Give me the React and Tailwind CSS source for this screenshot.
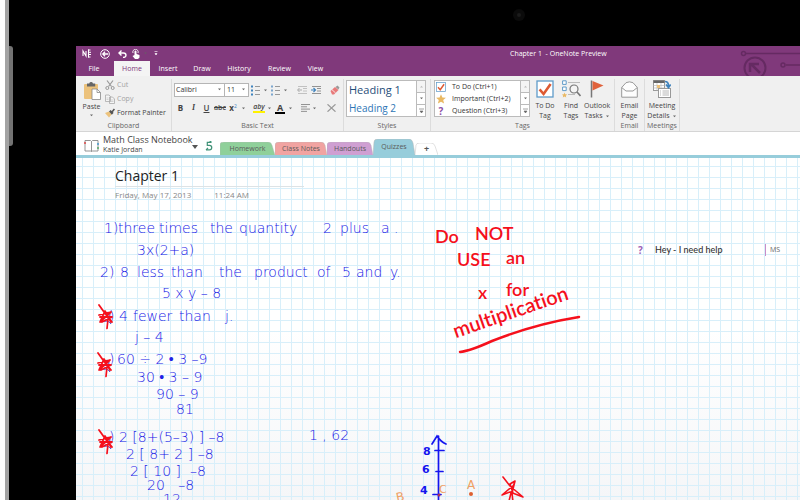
import React from "react";

const GROUP_LABEL = "flex h-[11px] items-center justify-center text-[7px] leading-[8px] text-[#666]";

function Caret({ className = "" }) {
  return (
    <svg viewBox="0 0 5 3" className={"h-[3px] w-[5px] shrink-0 " + className} aria-hidden="true">
      <path d="M1 0.5h3L2.5 2.3z" fill="#666" />
    </svg>
  );
}

function CaretButton({ label, className = "w-2" }) {
  return (
    <button aria-label={label} className={"flex h-4 shrink-0 items-center justify-center " + className}>
      <Caret />
    </button>
  );
}

function Tool({ label, className = "w-[10px]", children }) {
  return (
    <button aria-label={label} className={"flex h-4 shrink-0 items-center justify-center text-[8px] leading-[10px] text-[#444] " + className}>
      {children}
    </button>
  );
}

function Group({ label, className, children }) {
  return (
    <section aria-label={label} className={"flex shrink-0 flex-col border-r border-[#dcdcdc] " + className}>
      <div className="h-[43px]">{children}</div>
      <div className={GROUP_LABEL}>{label}</div>
    </section>
  );
}

function Scroller() {
  return (
    <div className="flex w-[9px] shrink-0 flex-col border-l border-[#bbb]">
      <button aria-label="Scroll up" className="flex flex-1 items-center justify-center bg-[#f4f4f4]">
        <svg viewBox="0 0 5 3" className="h-[3px] w-[5px]"><path d="M1 2.5h3L2.500 0.700z" fill="#bbb" /></svg>
      </button>
      <button aria-label="Scroll down" className="flex flex-1 items-center justify-center border-y border-[#bbb]">
        <Caret />
      </button>
      <button aria-label="More" className="flex flex-1 items-center justify-center">
        <svg viewBox="0 0 5 6" className="h-[6px] w-[5px]"><path d="M0 1h5M1 3h3L2.500 5z" fill="#666" stroke="#666" strokeWidth="0.6" /></svg>
      </button>
    </div>
  );
}

function BigButton({ lines, caret, className, children }) {
  return (
    <button className={"flex shrink-0 flex-col items-center text-[7px] leading-[10px] text-[#444] " + className}>
      <span className="mt-px mb-[3px] flex h-[18px] items-center">{children}</span>
      <span className="whitespace-nowrap">{lines[0]}</span>
      <span className="flex h-[10px] items-center gap-[2px] whitespace-nowrap">
        {lines[1]}
        {caret && <Caret />}
      </span>
    </button>
  );
}

function ListIcon({ dot }) {
  return (
    <svg viewBox="0 0 10 11" className="h-[11px] w-[10px]">
      <g fill={dot}><rect y="0.5" width="2" height="2" /><rect y="4.5" width="2" height="2" /><rect y="8.5" width="2" height="2" /></g>
      <path d="M4 1.5h5M4 5.5h5M4 9.5h5" stroke="#999" />
    </svg>
  );
}

function CheckBoxIcon({ className }) {
  return (
    <svg viewBox="0 0 18 18" className={className}>
      <rect x="1" y="1" width="16" height="16" fill="#fff" stroke="#5f9bc9" strokeWidth="1.3" />
      <path d="M3.6 9.4l4 4.6 7-10" fill="none" stroke="#dd5a33" strokeWidth="2.6" />
    </svg>
  );
}

function SectionTab({ label, color, path, width, className, active, textClass = "text-[#5a5a5a]" }) {
  return (
    <button aria-pressed={!!active} className={"relative shrink-0 text-[7px] leading-[8px] " + className}>
      <svg viewBox={"0 0 " + width + " 16"} preserveAspectRatio="none" className="absolute inset-0 h-full w-full" aria-hidden="true">
        <path d={path} fill={color} stroke="#b9b9b9" strokeWidth="0.5" />
      </svg>
      <span className={"relative whitespace-nowrap " + textClass}>{label}</span>
    </button>
  );
}

function RibbonGroups() {
  return (
    <div className="flex h-[56px] shrink-0 overflow-hidden border-b border-[#d5d5d5] bg-[#f0f0f0] pt-[3px]">
      <Group label="Clipboard" className="w-[96px]">
        <div className="flex gap-[3px] pt-[2px] pl-[5px]">
          <button className="flex w-[21px] flex-col items-center text-[7px] leading-[10px] text-[#444]">
            <svg viewBox="0 0 18 19" className="mb-[2px] h-[19px] w-[18px]">
              <rect x="1" y="3" width="14" height="15" rx="1" fill="#ecc27c" />
              <path d="M4 2.5h2.2a2 2 0 0 1 3.8 0h2.2v3H4z" fill="#666" />
              <path d="M9 8h5l3.5 3.5V18.500H9z" fill="#fff" stroke="#888" strokeWidth="0.8" />
              <path d="M14 8v3.500h3.500" fill="none" stroke="#888" strokeWidth="0.8" />
            </svg>
            Paste
            <Caret className="mt-[2px]" />
          </button>
          <div className="flex flex-col text-[7px] leading-[14px] text-[#a3a3a3]">
            <button className="-mt-[3px] flex h-[14px] items-center gap-[2px]">
              <svg viewBox="0 0 10 10" className="h-[10px] w-[10px]"><path d="M2 0.500l4.500 6M8 0.500l-4.500 6" stroke="#999" strokeWidth="1.200" /><circle cx="2.300" cy="8" r="1.500" fill="none" stroke="#999" /><circle cx="7.700" cy="8" r="1.500" fill="none" stroke="#999" /></svg>
              Cut
            </button>
            <button className="flex h-[14px] items-center gap-[2px]">
              <svg viewBox="0 0 10 10" className="h-[10px] w-[10px]"><path d="M0.500 1h3.500l1.500 1.500v5h-5z M4.500 3h3l2 2v4.500h-5z" fill="#f5f5f5" stroke="#aaa" strokeWidth="0.800" /><path d="M1.500 4h2M1.500 5.500h2M5.500 6h3M5.500 7.500h3" stroke="#bbb" strokeWidth="0.600" /></svg>
              Copy
            </button>
            <button className="flex h-[14px] items-center gap-[2px] whitespace-nowrap text-[#444]">
              <svg viewBox="0 0 10 10" className="h-[10px] w-[10px]"><path d="M0 5l4-1.500 2.500 3L4 9.500z" fill="#ecc27c" /><path d="M4 3.500l1.500-1.500 1.300 1 2-2.500L10 1.500 8 4l0.500 1-1.700 1.800z" fill="#555" /></svg>
              Format Painter
            </button>
          </div>
        </div>
      </Group>

      <Group label="Basic Text" className="w-[172px]">
        <div className="flex items-center pt-[3px] pl-[2px]">
          <label className="relative flex">
            <select aria-label="Font" className="h-[14px] w-[51px] appearance-none border border-[#b5b5b5] bg-white pl-px text-[7px] leading-[8px] text-[#333]"><option>Calibri</option></select>
            <Caret className="pointer-events-none absolute top-[5px] right-[3px]" />
          </label>
          <label className="relative flex">
            <select aria-label="Font size" className="h-[14px] w-[24px] appearance-none border border-l-0 border-[#b5b5b5] bg-white pl-[2px] text-[7px] leading-[8px] text-[#333]"><option>11</option></select>
            <Caret className="pointer-events-none absolute top-[5px] right-[3px]" />
          </label>
          <Tool label="Bullets" className="ml-[2px] w-[10px]"><ListIcon dot="#3f83bd" /></Tool>
          <CaretButton label="Bullet styles" />
          <Tool label="Numbering" className="ml-[2px] w-[10px]"><ListIcon dot="#7ca6cd" /></Tool>
          <CaretButton label="Number styles" />
          <Tool label="Decrease indent" className="ml-2 w-[10px]">
            <svg viewBox="0 0 10 8" className="h-2 w-[10px]"><path d="M1 0.500h9M6 2.500h4M6 5h4M1 7.500h9" stroke="#bbb" strokeWidth="0.900" /><path d="M5 4H1M2.500 2L0.500 4l2 2" fill="none" stroke="#aaa" /></svg>
          </Tool>
          <Tool label="Increase indent" className="ml-1 w-[10px]">
            <svg viewBox="0 0 10 8" className="h-2 w-[10px]"><path d="M1 0.500h9M6 2.500h4M6 5h4M1 7.500h9" stroke="#888" strokeWidth="0.900" /><path d="M0 4h4M2.500 2l2 2-2 2" fill="none" stroke="#3f83bd" strokeWidth="1.200" /></svg>
          </Tool>
          <Tool label="Clear formatting" className="ml-[9px] w-[10px]">
            <svg viewBox="0 0 10 10" className="h-[10px] w-[10px]"><path d="M0.500 6L5 2l3.500 3L4 9.500H2z" fill="#e77a7a" /><path d="M5.500 2L7.500 0.500 9.500 2.500 8.300 4.500z" fill="#999" /><path d="M2 4.700l3.500 3.200" stroke="#fff" strokeWidth="0.800" /></svg>
          </Tool>
        </div>
        <div className="flex items-center pt-[2px] pl-[2px]">
          <Tool label="Bold" className="w-[13px]"><b>B</b></Tool>
          <Tool label="Italic" className="w-[13px]"><i className="font-['Liberation_Serif',serif] font-bold">I</i></Tool>
          <Tool label="Underline" className="w-[13px]"><u className="font-semibold">U</u></Tool>
          <Tool label="Strikethrough" className="w-[14px]"><s className="text-[7px] font-semibold">abc</s></Tool>
          <Tool label="Superscript" className="w-[12px]"><b>x</b><sup className="text-[5px] leading-[6px] text-[#3f83bd]">2</sup></Tool>
          <CaretButton label="Script options" />
          <Tool label="Highlight" className="ml-[6px] w-[12px]">
            <span className="border-b-2 border-[#fff200] text-[7px] leading-[8px] font-semibold italic">aby</span>
          </Tool>
          <CaretButton label="Highlight colors" />
          <Tool label="Font color" className="ml-px w-[12px]">
            <span className="w-[10px] border-b-2 border-black text-[9px] leading-[9px] font-bold">A</span>
          </Tool>
          <CaretButton label="Font colors" />
          <Tool label="Align" className="ml-[6px] w-[11px]">
            <svg viewBox="0 0 10 8" className="h-2 w-[10px]"><path d="M0 0.500h9M0 2.800h6M0 5.100h9M0 7.400h6" stroke="#888" strokeWidth="0.900" /></svg>
          </Tool>
          <CaretButton label="Alignments" className="w-[7px]" />
          <Tool label="Delete" className="ml-2 w-[10px]">
            <svg viewBox="0 0 9 8" className="h-2 w-[9px]"><path d="M0.500 0.300l8 7.400M8.500 0.300l-8 7.400" stroke="#999" strokeWidth="1.200" /></svg>
          </Tool>
        </div>
      </Group>

      <Group label="Styles" className="w-[87px]">
        <div className="ml-[2px] mt-px flex h-[37px] w-[80px] border border-[#bbb] bg-white">
          <div className="flex flex-1 flex-col items-start pl-[2px] text-[11px] leading-[18px] whitespace-nowrap">
            <button className="h-[18px] text-[#1f4e79]">Heading 1</button>
            <button className="h-[18px] text-[10px] text-[#2e75b5]">Heading 2</button>
          </div>
          <Scroller />
        </div>
      </Group>

      <Group label="Tags" className="w-[184px]">
        <div className="flex">
          <div className="mt-px ml-[3px] flex h-[37px] w-[96px] border border-[#bbb] bg-white">
            <div className="flex flex-1 flex-col text-[7px] leading-[12px] whitespace-nowrap text-[#333]">
              <button className="flex h-[12px] items-center gap-[6px] pl-px"><CheckBoxIcon className="h-[10px] w-[10px]" />To Do (Ctrl+1)</button>
              <button className="flex h-[12px] items-center gap-[6px] pl-px">
                <svg viewBox="0 0 10 10" className="h-[10px] w-[10px]"><path d="M5 0.300l1.400 3.200 3.500 0.300-2.700 2.300 0.900 3.500L5 7.700 1.900 9.600l0.900-3.500L0.100 3.800l3.500-0.300z" fill="#e9b862" /></svg>
                Important (Ctrl+2)
              </button>
              <button className="flex h-[12px] items-center gap-[6px] pl-px"><span className="w-[10px] text-center text-[10px] font-bold text-[#8d4fa6]">?</span>Question (Ctrl+3)</button>
            </div>
            <Scroller />
          </div>
          <BigButton lines={["To Do", "Tag"]} className="ml-[3px] w-[24px]"><CheckBoxIcon className="h-[18px] w-[18px]" /></BigButton>
          <BigButton lines={["Find", "Tags"]} className="ml-px w-[26px]">
            <svg viewBox="0 0 19 18" className="h-[18px] w-[19px]">
              <path d="M0.600 0.800h3.600v3.600H0.600zM0.600 7h3.600v3.600H0.600z" fill="#fff" stroke="#5f9bc9" />
              <path d="M2.500 12.500l0.800 1.700 1.900 0.200-1.400 1.300 0.400 1.900-1.700-1-1.700 1 0.400-1.900L0 14.400l1.900-0.200z" fill="#e9b862" />
              <path d="M6 2.500h12M6 14.500h7" stroke="#bbb" />
              <circle cx="12" cy="9" r="4" fill="#f4f4f4" stroke="#777" strokeWidth="1.200" /><path d="M15 12l3.500 4" stroke="#777" strokeWidth="1.600" />
            </svg>
          </BigButton>
          <BigButton lines={["Outlook", "Tasks"]} caret className="w-[26px]">
            <svg viewBox="0 0 14 18" className="h-[18px] w-[14px]"><path d="M1.500 0.500v17" stroke="#777" strokeWidth="1.500" /><path d="M2.500 1l11 4.500-11 5z" fill="#e0623c" /></svg>
          </BigButton>
        </div>
      </Group>

      <Group label="Email" className="w-[30px]">
        <BigButton lines={["Email", "Page"]} className="w-full">
          <svg viewBox="0 0 17 17" className="h-[17px] w-[17px]"><path d="M0.700 6.500L5 1.700Q8.500 0 12 1.700l4.300 4.800v9.700H0.700z" fill="#fdfdfd" stroke="#999" /><path d="M0.700 6.500L5 10h7l4.300-3.500" fill="none" stroke="#999" /></svg>
        </BigButton>
      </Group>

      <Group label="Meetings" className="w-[35px]">
        <BigButton lines={["Meeting", "Details"]} caret className="w-full">
          <svg viewBox="0 0 18 18" className="h-[18px] w-[18px]">
            <rect x="0.500" y="0.500" width="11" height="10" fill="#fff" stroke="#999" /><path d="M0.500 0.500h11v2.500H0.500z" fill="#666" />
            <path d="M0.500 5.500h11M0.500 8h11M4 3v7.500M8 3v7.500" stroke="#bbb" strokeWidth="0.700" /><rect x="4" y="5" width="3" height="3" fill="#ecc27c" />
            <rect x="5.500" y="8.500" width="12" height="9" fill="#fff" stroke="#999" /><path d="M7 11h1M7 13h1M7 15h1M9.500 11h6.500M9.500 13h6.500M9.500 15h6.500" stroke="#999" strokeWidth="0.700" />
            <path d="M12 1.500q3.500 0 3.500 4.500M13 4.500l2.500 3 2.200-3" fill="none" stroke="#3f83bd" strokeWidth="1.700" />
          </svg>
        </BigButton>
      </Group>
    </div>
  );
}

/* Handwritten words: [text, left, baseline] in canvas coordinates */
const BLUE_INK = [
  ["1)", 28, 76], ["three", 42, 76], ["times", 83, 76], ["the", 134, 76], ["quantity", 163, 76], ["2", 247, 76], ["plus", 264, 76], ["a .", 305, 76],
  ["3x(2+a)", 61, 98],
  ["2)", 24, 120], ["8", 44, 120], ["less", 61, 120], ["than", 95, 120], ["the", 143, 120], ["product", 178, 120], ["of", 241, 120], ["5", 266, 120], ["and", 280, 120], ["y.", 314, 120],
  ["5 x y – 8", 86, 141],
  [")", 33, 164], ["4", 43, 164], ["fewer", 57, 164], ["than", 103, 164], ["j.", 149, 164],
  ["j – 4", 59, 185],
  [")", 33, 207], ["60 ÷ 2 • 3 –9", 41, 207],
  ["30 • 3 – 9", 61, 225],
  ["90 – 9", 80, 242],
  ["81", 100, 257],
  [")", 33, 285], ["2 [8+(5–3) ] –8", 43, 285],
  ["2 [ 8+ 2 ] –8", 50, 302],
  ["2 [ 10 ]  –8", 54, 319],
  ["20   –8", 71, 333],
  ["12", 87, 347],
  ["1 , 62", 233, 283],
];

const RED_INK = [
  ["Do", 359, 85], ["NOT", 399, 82], ["USE", 381, 108], ["an", 430, 106], ["x", 402, 141], ["for", 430, 138],
];

function InkStar({ className }) {
  return (
    <svg viewBox="0 0 17 26" className={"absolute h-[26px] w-[17px] " + className} aria-hidden="true">
      <path d="M7 9q5-2 5 2t-6 6q6 0 7 3" fill="none" stroke="#3838d0" />
      <path d="M1 1l5 7 8 10M1 11l12-3-11 10 5-11 6 11M2 13h12L4 18" fill="none" stroke="#f5101c" strokeWidth="1.800" strokeLinejoin="round" strokeLinecap="round" />
      <path d="M10 15L9 24.500" stroke="#f5101c" strokeWidth="1.700" strokeLinecap="round" />
    </svg>
  );
}

function Canvas() {
  return (
    <main className="relative flex-1 overflow-hidden bg-[linear-gradient(to_right,#d8effa_1px,transparent_1px),linear-gradient(to_bottom,#d8effa_1px,transparent_1px),linear-gradient(to_bottom,#ffffff_50%,#f5f6f8)] bg-size-[11px_11px,11px_11px,100%_100%] bg-position-[6px_0px,0px_8px,0px_0px]">
      <header className="ml-[30px] w-[198px] pl-[9px]">
        <h1 className="h-[29px] border-b border-[#dde3e6] pt-[8px] text-[14px] leading-[20px] text-[#222]">Chapter 1</h1>
        <p className="flex gap-[23px] pt-[3px] text-[8px] leading-[10px] whitespace-nowrap text-[#888]"><span>Friday, May 17, 2013</span><span>11:24 AM</span></p>
      </header>

      {BLUE_INK.map(([text, x, y]) => (
        <span key={text + x + y} className="absolute -mt-[15px] font-['DejaVu_Sans',sans-serif] text-[14px] leading-[18px] font-extralight whitespace-pre text-[#2020e6]" style={{ left: x, top: y }}>{text}</span>
      ))}
      {RED_INK.map(([text, x, y]) => (
        <span key={text} className="absolute -mt-[19px] font-['Lato',sans-serif] text-[18px] leading-[24px] font-semibold whitespace-pre text-[#f5101c]" style={{ left: x, top: y }}>{text}</span>
      ))}
      <span className="absolute top-[160px] left-[381px] origin-bottom-left -rotate-[19deg] font-['Lato',sans-serif] text-[20px] leading-[24px] font-semibold text-[#f5101c] [font-variant-ligatures:none]">multiplication</span>
      <svg viewBox="0 0 124 42" className="absolute top-[155px] left-[382px] h-[42px] w-[124px]" aria-hidden="true">
        <path d="M2 39q10-1 32-11Q77 11 121 4" fill="none" stroke="#f5101c" strokeWidth="2.500" strokeLinecap="round" />
      </svg>

      <InkStar className="top-[146px] left-[22px]" />
      <InkStar className="top-[194px] left-[21px]" />
      <InkStar className="top-[271px] left-[22px]" />

      <svg viewBox="0 0 30 70" className="absolute top-[276px] left-[350px] h-[70px] w-[30px]" aria-hidden="true">
        <path d="M12.500 70V2M6 10l5-8q4 6 9 8M9 16.500h9M10 37.500h7M7 60.500h8" fill="none" stroke="#1414ef" strokeWidth="1.700" strokeLinecap="round" />
        <circle cx="13" cy="61" r="1.500" fill="#b03050" />
      </svg>
      <span className="absolute top-[287px] left-[347px] font-['DejaVu_Sans',sans-serif] text-[11px] leading-[14px] font-bold text-[#1414ef]">8</span>
      <span className="absolute top-[305px] left-[346px] font-['DejaVu_Sans',sans-serif] text-[11px] leading-[14px] font-bold text-[#1414ef]">6</span>
      <span className="absolute top-[326px] left-[344px] font-['DejaVu_Sans',sans-serif] text-[11px] leading-[14px] font-bold text-[#1414ef]">4</span>
      <span className="absolute top-[325px] left-[363px] font-['DejaVu_Sans',sans-serif] text-[11px] leading-[14px] text-[#f0a064]">C</span>
      <span className="absolute top-[320px] left-[391px] font-['DejaVu_Sans',sans-serif] text-[12px] leading-[14px] text-[#f0a064]">A</span>
      <span className="absolute top-[332px] left-[320px] -rotate-12 font-['DejaVu_Sans',sans-serif] text-[12px] leading-[14px] text-[#f0a064]">B</span>
      <span className="absolute top-[334px] left-[393px] h-1 w-1 rounded-full bg-[#dd6030]" />
      <svg viewBox="0 0 25 28" className="absolute top-[317px] left-[424px] h-[28px] w-[25px]" aria-hidden="true">
        <path d="M3 2l7 9 13 11-13-5-8 3 12-10 1-4-4 12-2 8M10 9l5-3-3 12 1 9M10 9l3 9" fill="none" stroke="#f5101c" strokeWidth="1.600" strokeLinejoin="round" strokeLinecap="round" />
      </svg>

      <p className="absolute top-[86px] left-[562px] flex h-3 items-center whitespace-nowrap text-[8px] leading-[12px] font-medium text-[#333]">
        <span className="w-[17px] text-[10px] font-bold text-[#9c62b8]">?</span>
        <span className="w-[110px] font-['Lato',sans-serif] text-[9px]">Hey - I need help</span>
        <span className="border-l border-[#c98cc9] pl-1 text-[7px] text-[#666]">MS</span>
      </p>
    </main>
  );
}

export default function App() {
  return (
    <div className="relative flex h-screen overflow-hidden bg-black font-['Open_Sans','Noto_Sans',sans-serif]">
      <div className="w-[5px] shrink-0 bg-white" />
      <div className="w-1 shrink-0 bg-[#a3a3a3]" />
      <div className="w-[67px] shrink-0 pt-[46px]"><div className="h-[100px] w-1 rounded-r-[3px] bg-[#737373]" /></div>
      <div className="absolute top-[9px] left-[513px] flex h-3 w-3 items-center justify-center rounded-full bg-[#0b0b0b]"><span className="h-1 w-1 rounded-full bg-[#1c1c1c]" /></div>

      <div className="mt-[46px] flex min-w-0 flex-1 flex-col bg-white">
        <header className="relative flex h-[30px] shrink-0 flex-col overflow-hidden bg-[#80397b] text-white">
          <svg viewBox="0 0 60 30" className="absolute top-0 right-0 h-[30px] w-[60px]" fill="none" stroke="#652a62" strokeWidth="1.500" aria-hidden="true">
            <circle cx="3.500" cy="7.500" r="2" /><path d="M6 7.500h54M46 19h14" /><circle cx="43" cy="19" r="2" />
            <circle cx="15" cy="22" r="10.500" strokeWidth="2" /><path d="M20 27l-9-9M10 26v-8h9" strokeWidth="2.500" />
          </svg>
          <div className="flex h-[15px] items-center pl-[6px]">
            <svg viewBox="0 0 10 9" className="h-[9px] w-[10px]" fill="none" stroke="#fff" aria-hidden="true"><path d="M1 7v-5l3 5v-5" strokeWidth="1.100" /><path d="M6.500 0.500v8M6 1h2.500M7 3.300h2M7 5.500h2M6 8h2.500" strokeWidth="1" /></svg>
            <button aria-label="Back" className="ml-2"><svg viewBox="0 0 10 10" className="h-[10px] w-[10px]" fill="none" stroke="#fff"><circle cx="5" cy="5" r="4.300" /><path d="M8 5H3M5 2.800L2.800 5 5 7.200" strokeWidth="1.300" /></svg></button>
            <button aria-label="Undo" className="ml-2"><svg viewBox="0 0 9 8" className="h-2 w-[9px]" fill="none" stroke="#fff" strokeWidth="1.400"><path d="M3.500 0.500L1 3l2.500 2.500M1 3h4.500q2.500 0 2.500 2.200T5 7.500" /></svg></button>
            <button aria-label="Touch mode" className="ml-[5px]"><svg viewBox="0 0 8 10" className="h-[10px] w-2"><path d="M2.500 6V2.500a1 1 0 0 1 2 0V5l3 1v2.500L6 10H3L0.500 7z" fill="#fff" /><path d="M1 4a2.700 2.700 0 1 1 5 0" fill="none" stroke="#fff" strokeWidth="0.900" /></svg></button>
            <Caret className="ml-[3px] opacity-70" />
            <button aria-label="Customize toolbar" className="ml-[6px]"><svg viewBox="0 0 4 5" className="h-[5px] w-1"><path d="M0.500 0.500h3M1 2.500h2L2 4z" fill="#fff" stroke="#fff" strokeWidth="0.600" /></svg></button>
            <p className="ml-[352px] text-[7px] leading-[10px] whitespace-pre">Chapter 1  - OneNote Preview</p>
          </div>
          <nav className="flex h-[15px] text-[7px] leading-[15px]">
            <button className="w-[38px] pr-[2px]">File</button>
            <button className="w-[36px] bg-[#f4f4f4] text-[#80397b]">Home</button>
            <button className="w-[36px]">Insert</button>
            <button className="w-[32px]">Draw</button>
            <button className="w-[42px]">History</button>
            <button className="w-[39px]">Review</button>
            <button className="w-[33px]">View</button>
          </nav>
        </header>

        <RibbonGroups />

        <div className="flex h-[26px] shrink-0 items-end border-b-[3px] border-[#97cddb] bg-white">
          <button className="mb-px flex h-[21px] w-[127px] items-center pl-2 text-left">
            <svg viewBox="0 0 15 12" className="mt-1 mr-1 h-3 w-[15px] shrink-0" aria-hidden="true">
              <path d="M1 0.500h5.500l1 1 1-1H14v10.500H8.500l-1 0.500-1-0.500H1zM7.500 1.500v10" fill="#fff" stroke="#888" strokeWidth="0.900" /><path d="M1 2v2" stroke="#d44" strokeWidth="1.500" /><path d="M14 3v2" stroke="#49c" strokeWidth="1.500" /><path d="M14 7v2" stroke="#5a6" strokeWidth="1.500" />
            </svg>
            <span className="flex w-[89px] shrink-0 flex-col whitespace-nowrap text-[#444]">
              <span className="text-[9px] leading-[11px]">Math Class Notebook</span>
              <span className="text-[7px] leading-[9px]">Katie Jordan</span>
            </span>
            <svg viewBox="0 0 6 4" className="mt-[7px] h-1 w-[6px] shrink-0"><path d="M0 0h6L3 4z" fill="#555" /></svg>
          </button>
          <button aria-label="Sync notebook" className="mb-1 ml-[2px] flex w-[15px] justify-start">
            <svg viewBox="0 0 8 10" className="h-[10px] w-2" fill="none" stroke="#3f9277" strokeWidth="1.200"><path d="M6.500 1.300H2.300v3h2.200a2.200 2.200 0 0 1 0 4.500H1M3 6.800L1 8.800M4.700 0l1.800 1.300" /></svg>
          </button>
          <SectionTab label="Homework" color="#8fd09a" width={55} path="M0 16V3Q0 0 4 0H48Q51 0 52 4L55 16" className="h-[13px] w-[55px]" />
          <SectionTab label="Class Notes" color="#f1a3a1" width={52} path="M0 16V4Q0 0 4 0H46Q49 0 50 4L52 16" className="h-[13px] w-[52px]" />
          <SectionTab label="Handouts" color="#cf9fd2" width={46} path="M0 16V4Q0 0 4 0H40Q43 0 44 4L46 16" className="h-[13px] w-[46px]" />
          <SectionTab label="Quizzes" color="#97cddb" width={42} path="M0 16L1 3Q1 0 5 0H36Q39 0 40 4L42 16" className="h-4 w-[42px]" active />
          <SectionTab label="+" color="#ffffff" width={23} path="M0 16L1 3Q1 0 5 0H16Q19 0 20 4L23 16" className="h-3 w-[23px]" textClass="text-[9px] font-bold text-[#555]" />
        </div>

        <Canvas />
      </div>
    </div>
  );
}
